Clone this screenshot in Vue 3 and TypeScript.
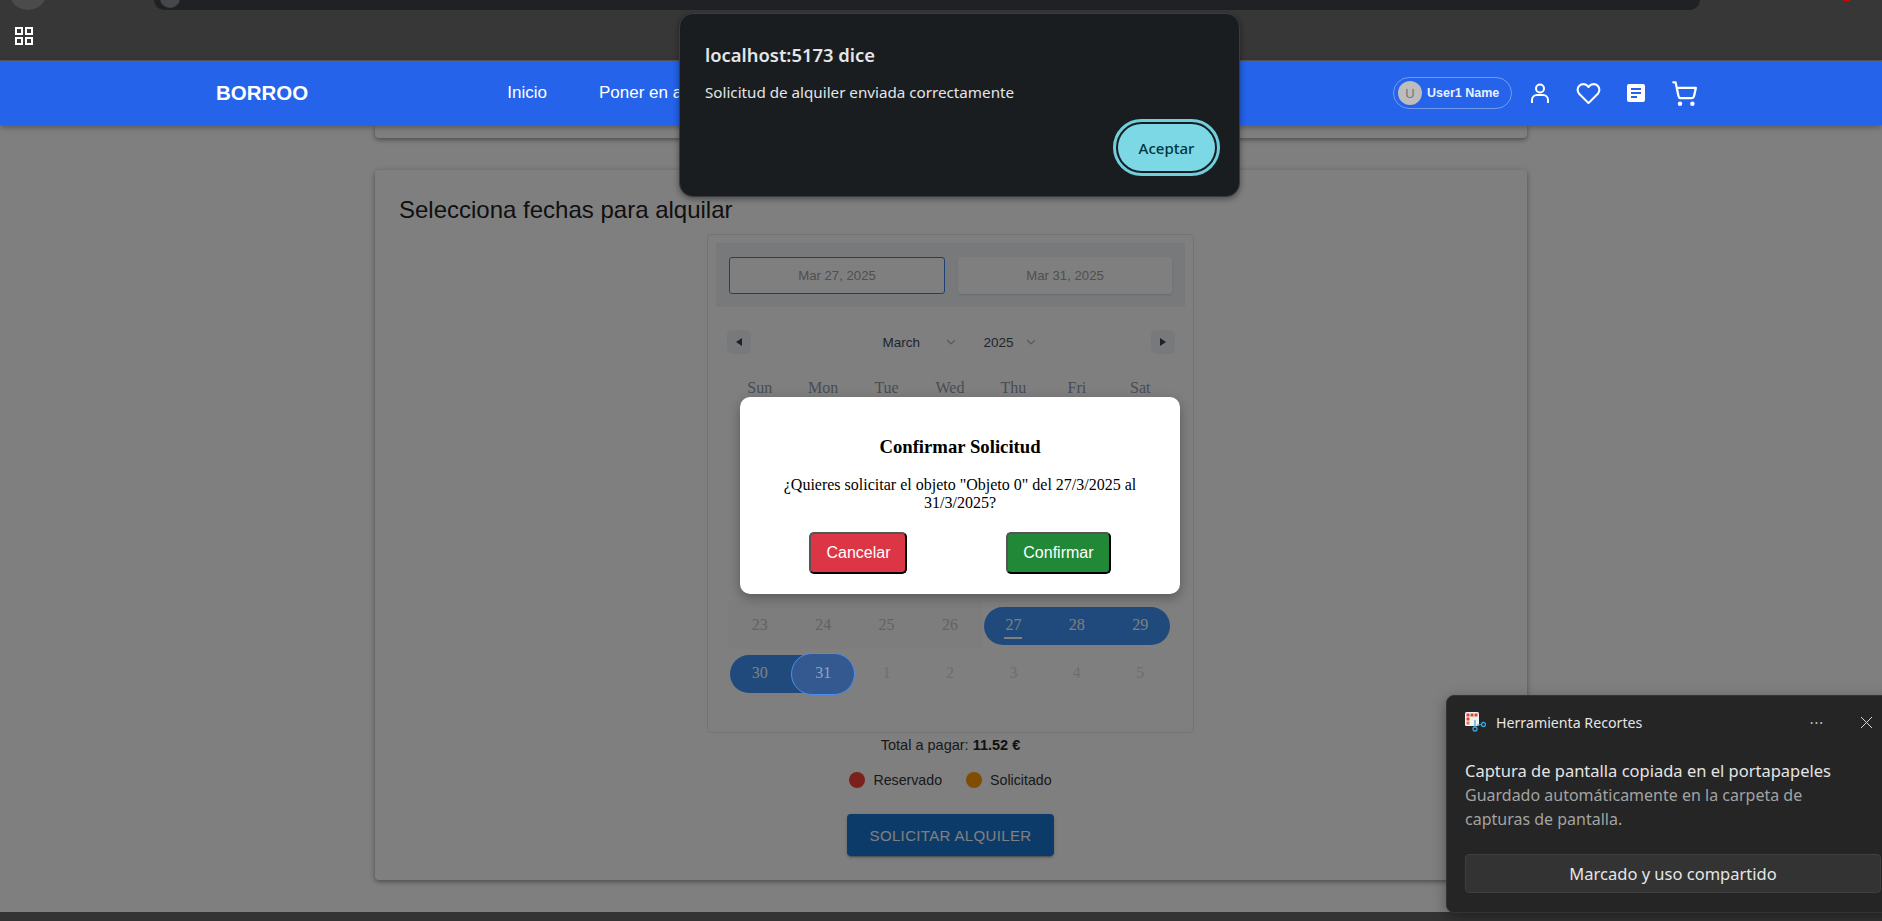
<script setup lang="ts">
interface Day { n: number; kind: string }

const weekdays = ['Sun', 'Mon', 'Tue', 'Wed', 'Thu', 'Fri', 'Sat']

function buildDays(): Day[] {
  const out: Day[] = []
  // The first four weeks sit entirely behind the confirmation modal.
  for (const n of [23, 24, 25, 26, 27, 28]) out.push({ n, kind: 'covered' })
  out.push({ n: 1, kind: 'covered' })
  for (let n = 2; n <= 22; n++) out.push({ n, kind: 'covered' })
  for (let n = 23; n <= 26; n++) out.push({ n, kind: 'past' })
  out.push({ n: 27, kind: 'range start today' })
  out.push({ n: 28, kind: 'range' })
  out.push({ n: 29, kind: 'range end' })
  out.push({ n: 30, kind: 'range start' })
  out.push({ n: 31, kind: 'range end focus' })
  for (let n = 1; n <= 5; n++) out.push({ n, kind: 'next' })
  return out
}
const days = buildDays()
</script>

<template>
  <div class="screen">
    <div class="browser">
      <div class="browser-top">
        <span class="back-circle"></span>
        <div class="address"><span class="address-dot"></span></div>
        <span class="red-mark"></span>
      </div>
      <svg class="apps" width="18" height="18" viewBox="0 0 18 18" fill="none" stroke="#fff" stroke-width="2">
        <rect x="1" y="1" width="6" height="6" /><rect x="11" y="1" width="6" height="6" />
        <rect x="1" y="11" width="6" height="6" /><rect x="11" y="11" width="6" height="6" />
      </svg>
    </div>

    <header class="nav">
      <span class="logo">BORROO</span>
      <nav class="links">
        <a>Inicio</a>
        <a>Poner en alquiler</a>
      </nav>
      <div class="tools">
        <div class="user-pill"><span class="avatar">U</span><span class="user-name">User1 Name</span></div>
        <svg width="24" height="24" viewBox="0 0 24 24" fill="none" stroke="#fff" stroke-width="2">
          <circle cx="12" cy="7.500" r="4" /><path d="M4 22v-3a5 5 0 0 1 5-5h6a5 5 0 0 1 5 5v3" />
        </svg>
        <svg width="25" height="25" viewBox="0 0 24 24" fill="none" stroke="#fff" stroke-width="2" stroke-linejoin="round">
          <path d="M20.84 4.61a5.5 5.5 0 0 0-7.78 0L12 5.67l-1.06-1.06a5.5 5.5 0 0 0-7.78 7.78l1.06 1.06L12 21.23l7.78-7.78 1.06-1.06a5.5 5.5 0 0 0 0-7.78z" />
        </svg>
        <svg width="20" height="20" viewBox="0 0 20 20">
          <rect x="1" y="1" width="18" height="18" rx="2" fill="#fff" />
          <path d="M5 6h10M5 10h10M5 14h6" stroke="#2563eb" stroke-width="2" />
        </svg>
        <svg width="27" height="27" viewBox="0 0 24 24" fill="none" stroke="#fff" stroke-width="2" stroke-linecap="round" stroke-linejoin="round">
          <circle cx="8" cy="21" r="1" /><circle cx="19" cy="21" r="1" />
          <path d="M2.05 2.05h2l2.66 12.42a2 2 0 0 0 2 1.58h9.78a2 2 0 0 0 1.95-1.57l1.65-7.43H5.12" />
        </svg>
      </div>
    </header>

    <main class="page">
      <section class="card stub"></section>
      <section class="card booking">
        <h2 class="booking-title">Selecciona fechas para alquilar</h2>
        <div class="calendar">
          <div class="range-inputs">
            <div class="date-input active">Mar 27, 2025</div>
            <div class="date-input">Mar 31, 2025</div>
          </div>
          <div class="month-nav">
            <button class="arrow"><span class="tri left"></span></button>
            <div class="month-pick">
              <span class="pick month">March</span>
              <svg class="chev" width="10" height="7" viewBox="0 0 10 7" fill="none" stroke="#b5b5b5" stroke-width="1.2"><path d="M1 1l4 4 4-4" /></svg>
              <span class="pick year">2025</span>
              <svg class="chev" width="10" height="7" viewBox="0 0 10 7" fill="none" stroke="#b5b5b5" stroke-width="1.2"><path d="M1 1l4 4 4-4" /></svg>
            </div>
            <button class="arrow"><span class="tri right"></span></button>
          </div>
          <div class="week-head"><span v-for="w in weekdays" :key="w">{{ w }}</span></div>
          <div class="month-grid">
            <span v-for="(d, i) in days" :key="i" class="cell" :class="d.kind"><b class="num">{{ d.n }}</b></span>
          </div>
        </div>
        <p class="total">Total a pagar: <strong>11.52 €</strong></p>
        <div class="legend">
          <span class="dot red"></span><span class="legend-label">Reservado</span>
          <span class="dot orange"></span><span class="legend-label">Solicitado</span>
        </div>
        <button class="request">SOLICITAR ALQUILER</button>
      </section>
      <div class="backdrop"></div>
      <div class="modal">
        <h3>Confirmar Solicitud</h3>
        <p>¿Quieres solicitar el objeto "Objeto 0" del 27/3/2025 al 31/3/2025?</p>
        <div class="modal-actions">
          <button class="cancel">Cancelar</button>
          <button class="confirm">Confirmar</button>
        </div>
      </div>
    </main>
    <div class="taskbar-edge"></div>

    <div class="alert">
      <div class="alert-title">localhost:5173 dice</div>
      <div class="alert-msg">Solicitud de alquiler enviada correctamente</div>
      <div class="alert-actions"><button class="accept">Aceptar</button></div>
    </div>

    <aside class="toast">
      <div class="toast-head">
        <svg width="21" height="20" viewBox="0 0 21 20">
          <rect x="0" y="0" width="14" height="14" rx="1.500" fill="#f2f2f2" />
          <rect x="1.500" y="1.500" width="3" height="3" fill="#d9452e" /><rect x="5.500" y="1.500" width="3" height="3" fill="#d9452e" /><rect x="9.500" y="1.500" width="3" height="3" fill="#d9452e" />
          <rect x="1.500" y="5.500" width="3" height="3" fill="#d9452e" /><rect x="1.500" y="9.500" width="3" height="3" fill="#e8734f" />
          <path d="M10 8v7M12 13l5-.5" stroke="#37a5e0" stroke-width="1.200" fill="none" />
          <circle cx="10" cy="17" r="2" fill="none" stroke="#37a5e0" stroke-width="1.300" /><circle cx="18.500" cy="12.500" r="2" fill="none" stroke="#37a5e0" stroke-width="1.300" />
        </svg>
        <span class="toast-app">Herramienta Recortes</span>
        <span class="toast-dots">···</span>
        <svg class="toast-x" width="13" height="13" viewBox="0 0 13 13" stroke="#d8d8d8" stroke-width="1"><path d="M1 1l11 11M12 1 1 12" /></svg>
      </div>
      <div class="toast-strong">Captura de pantalla copiada en el portapapeles</div>
      <div class="toast-text">Guardado automáticamente en la carpeta de capturas de pantalla.</div>
      <button class="toast-btn">Marcado y uso compartido</button>
    </aside>
  </div>
</template>

<style>
html, body { margin: 0; overflow: hidden; }
</style>

<style scoped>
.screen {
  position: relative;
  width: 1882px;
  height: 921px;
  overflow: hidden;
  display: flex;
  flex-direction: column;
  font-family: "Liberation Sans", Arial, sans-serif;
  background: #fff;
}
.browser {
  height: 60px;
  flex: none;
  background: #373737;
  border-bottom: 1px solid #5a5a5a;
}
.browser-top { display: flex; height: 10px; }
.back-circle { width: 38px; height: 38px; margin: -28px 0 0 9px; border-radius: 50%; background: #4b4b4b; flex: none; }
.address {
  margin-left: 107px;
  width: 1546px;
  height: 10px;
  background: #202124;
  border-radius: 0 0 14px 14px;
  position: relative;
  overflow: hidden;
  flex: none;
}
.address-dot { position: absolute; left: 6px; top: -12px; width: 20px; height: 20px; border-radius: 50%; background: #46474a; }
.red-mark { width: 7px; height: 1px; margin-left: 143px; background: #d00; flex: none; }
.apps { display: block; margin: 17px 0 0 15px; }

.nav {
  position: relative;
  z-index: 3;
  height: 64px;
  flex: none;
  display: flex;
  align-items: center;
  padding: 0 184px 0 216px;
  background: #2563eb;
  color: #fff;
  box-shadow: 0 2px 6px rgba(0, 0, 0, .35);
}
.logo { font-size: 20.500px; font-weight: 700; }
.links { display: flex; gap: 52px; margin-left: 199px; font-size: 17px; }
.tools { margin-left: auto; display: flex; align-items: center; }
.tools svg { display: block; }
.tools svg:nth-child(2) { margin-left: 16px; }
.tools svg:nth-child(3) { margin-left: 24px; }
.tools svg:nth-child(4) { margin-left: 25px; }
.tools svg:nth-child(5) { margin-left: 25px; }
.user-pill {
  box-sizing: border-box;
  width: 119px;
  height: 32px;
  display: flex;
  align-items: center;
  padding-left: 4px;
  gap: 5px;
  border: 1px solid rgba(255, 255, 255, .35);
  border-radius: 16px;
}
.avatar {
  width: 24px;
  height: 24px;
  border-radius: 50%;
  background: #bdbdbd;
  color: #757575;
  display: flex;
  align-items: center;
  justify-content: center;
  font-size: 13px;
}
.user-name { font-size: 12.500px; font-weight: 700; color: #eaf0ff; }

.page {
  position: relative;
  isolation: isolate;
  flex: 1;
  min-height: 0;
  padding-left: 375px;
  background: #fff;
}
.card {
  width: 1152px;
  box-sizing: border-box;
  background: #fff;
  border-radius: 4px;
  box-shadow: 0 2px 4px rgba(0, 0, 0, .3), 0 1px 8px rgba(0, 0, 0, .14);
}
.stub { height: 13px; border-radius: 0 0 4px 4px; margin-bottom: 32px; }
.booking {
  height: 710px;
  padding: 24px 0 0;
  display: flex;
  flex-direction: column;
  align-items: center;
}
.booking-title {
  align-self: flex-start;
  margin: 0 0 0 24px;
  height: 40px;
  line-height: 32px;
  font-size: 24px;
  font-weight: 400;
  color: #222;
}
.calendar {
  box-sizing: border-box;
  width: 487px;
  height: 499px;
  margin-right: 1px;
  border: 1px solid #e6e6e6;
  border-radius: 4px;
  padding: 8px;
}
.range-inputs {
  height: 64px;
  box-sizing: border-box;
  padding: 14px 13px;
  display: flex;
  gap: 13px;
  background: #eff2f7;
}
.date-input {
  flex: 1;
  height: 37px;
  box-sizing: border-box;
  display: flex;
  align-items: center;
  justify-content: center;
  font-size: 13.200px;
  color: #a0a0a0;
  background: #fff;
  border-radius: 3px;
  box-shadow: 0 1px 2px rgba(0, 0, 0, .12);
}
.date-input.active { border: 1px solid #3d7fe6; box-shadow: none; }
.month-nav {
  display: flex;
  justify-content: space-between;
  align-items: center;
  margin: 23px 10px 0 11px;
  height: 24px;
}
.arrow {
  width: 24px;
  height: 24px;
  padding: 0;
  border: 0;
  border-radius: 5px;
  background: #eff2f7;
  display: flex;
  align-items: center;
  justify-content: center;
}
.tri { width: 0; height: 0; border-top: 4px solid transparent; border-bottom: 4px solid transparent; }
.tri.left { border-right: 6px solid #34445c; }
.tri.right { border-left: 6px solid #34445c; }
.month-pick { display: flex; align-items: center; margin-left: 16px; font-size: 13.500px; color: #3f4a5c; }
.pick.month { width: 63px; }
.pick.year { width: 42px; margin-left: 28px; }
.chev { display: block; }
.week-head {
  display: grid;
  grid-template-columns: repeat(7, 1fr);
  margin: 22px 13px 0 12px;
  height: 24px;
  line-height: 24px;
  text-align: center;
  font-family: "Liberation Serif", "Times New Roman", serif;
  font-size: 16px;
  color: #8f99aa;
}
.month-grid {
  display: grid;
  grid-template-columns: repeat(7, 1fr);
  grid-auto-rows: 48px;
  margin: 9px 13px 0 12px;
  font-family: "Liberation Serif", "Times New Roman", serif;
  font-size: 16px;
}
.cell {
  position: relative;
  display: flex;
  align-items: center;
  justify-content: center;
}
.num { position: relative; font-weight: 400; }
.cell.covered .num { visibility: hidden; }
.cell.past { background: #fafafa; color: #c6c6c6; }
.cell.next { color: #dcdcdc; }
.cell.range { color: #fff; }
.cell.range::before {
  content: "";
  position: absolute;
  inset: 6px 0 4px;
  background: #4094f8;
}
.cell.start::before { left: 2px; border-radius: 19px 0 0 19px; }
.cell.end::before { right: 2px; border-radius: 0 19px 19px 0; }
.cell.focus::after {
  content: "";
  position: absolute;
  z-index: 11;
  inset: 4px 0 2px;
  box-sizing: border-box;
  background: #345990;
  border: 1.500px solid #4a8cf0;
  border-radius: 21px;
}
.cell.focus .num { z-index: 12; color: #8fa3c2; }
.cell.today .num::after {
  content: "";
  position: absolute;
  left: -1px;
  right: -1px;
  bottom: -5px;
  height: 2px;
  background: #fff;
}
.total { margin: 3px 1px 0 0; font-size: 14.500px; line-height: 18px; color: #333; }
.total strong { color: #222; }
.legend { display: flex; align-items: center; margin: 18px 1px 0 0; height: 16px; font-size: 14.200px; color: #333; }
.dot { width: 16px; height: 16px; border-radius: 50%; }
.dot.red { background: #f44336; }
.dot.orange { background: #ff9800; margin-left: 24px; }
.legend-label { margin-left: 8px; }
.request {
  margin: 26px 1px 0 0;
  width: 207px;
  height: 42px;
  border: 0;
  border-radius: 4px;
  background: #1976d2;
  color: #fff;
  font-family: inherit;
  font-size: 15px;
  letter-spacing: .35px;
  box-shadow: 0 3px 1px -2px rgba(0, 0, 0, .2), 0 2px 2px rgba(0, 0, 0, .14), 0 1px 5px rgba(0, 0, 0, .12);
}
.backdrop { position: absolute; inset: 0; z-index: 10; background: rgba(0, 0, 0, .5); }
.modal {
  position: absolute;
  z-index: 20;
  left: 740px;
  top: 272px;
  width: 440px;
  height: 197px;
  box-sizing: border-box;
  padding: 20px;
  background: #fff;
  border-radius: 10px;
  box-shadow: 0 4px 12px rgba(0, 0, 0, .3);
  text-align: center;
  font-family: "Liberation Serif", "Times New Roman", serif;
  color: #000;
}
.modal h3 { margin: 19px 0 0; font-size: 18.720px; line-height: 21px; }
.modal p { margin: 19px 0 0; font-size: 16px; line-height: 18px; }
.modal-actions { display: flex; justify-content: space-around; margin-top: 20px; }
.modal-actions button {
  height: 42px;
  box-sizing: border-box;
  padding: 0 15px;
  border: 2px outset #000;
  border-radius: 5px;
  color: #fff;
  font-family: "Liberation Sans", Arial, sans-serif;
  font-size: 16px;
}
.cancel { background: #dc3545; }
.confirm { background: #218838; }

.taskbar-edge { height: 9px; flex: none; background: #333; position: relative; z-index: 2; }

.alert {
  position: absolute;
  z-index: 5;
  left: 679px;
  top: 13px;
  width: 561px;
  height: 184px;
  box-sizing: border-box;
  padding: 29px 24px 0 25px;
  background: #191d20;
  border: 1px solid #3a3d40;
  border-radius: 14px;
  box-shadow: 0 2px 6px rgba(0, 0, 0, .4);
  font-family: "Noto Sans", "Open Sans", sans-serif;
  color: #e3e6e8;
}
.alert-title { font-size: 18.400px; font-weight: 600; line-height: 24px; }
.alert-msg { margin-top: 15px; font-size: 15.200px; line-height: 20px; }
.alert-actions { display: flex; justify-content: flex-end; margin-top: 22px; }
.accept {
  width: 97px;
  height: 47px;
  border: 0;
  border-radius: 24px;
  background: #7dd8e5;
  color: #00363d;
  font-family: inherit;
  font-size: 15px;
  font-weight: 500;
  outline: 3px solid #6fcfdd;
  outline-offset: 2px;
}

.toast {
  position: absolute;
  z-index: 6;
  left: 1446px;
  top: 695px;
  width: 450px;
  height: 218px;
  box-sizing: border-box;
  padding: 16px 0 0 18px;
  background: #252525;
  border: 1px solid #333;
  border-radius: 8px;
  box-shadow: 0 4px 14px rgba(0, 0, 0, .35);
  font-family: "Noto Sans", "Open Sans", sans-serif;
  color: #e4e4e4;
}
.toast-head { display: flex; align-items: center; height: 20px; width: 408px; }
.toast-app { margin-left: 10px; font-size: 14.200px; }
.toast-dots { margin-left: auto; font-size: 14px; color: #c8c8c8; letter-spacing: 1px; }
.toast-x { margin-left: 36px; }
.toast-strong { margin-top: 27px; font-size: 16.500px; line-height: 24px; white-space: nowrap; }
.toast-text { font-size: 16px; line-height: 24px; color: #a3a3a3; width: 390px; }
.toast-btn {
  display: block;
  margin-top: 23px;
  width: 416px;
  height: 39px;
  box-sizing: border-box;
  background: #333;
  border: 1px solid #3f3f3f;
  border-radius: 4px;
  color: #e6e6e6;
  font-family: inherit;
  font-size: 16.500px;
}
</style>
